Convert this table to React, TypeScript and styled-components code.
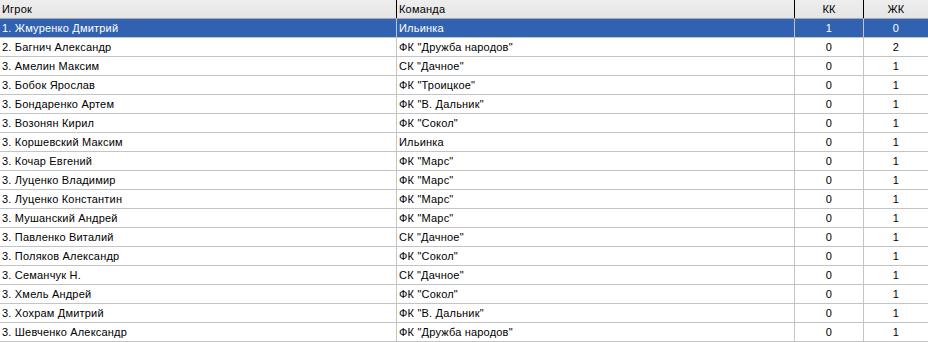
import React from "react";
import styled, { createGlobalStyle } from "styled-components";

const Global = createGlobalStyle`
  html, body { margin: 0; padding: 0; background: #fff; }
  body { font-family: "Liberation Sans", Arial, sans-serif; font-size: 11px; letter-spacing: 0.2px; }
`;

const cols = "397px 398px 69px 64px";

const Grid = styled.div`
  width: 928px;
  display: flex;
  flex-direction: column;
`;

const HeaderRow = styled.div`
  display: grid;
  grid-template-columns: ${cols};
  height: 18px;
  background: linear-gradient(#efeeee, #e6e5e5);
  border-bottom: 1px solid #a8a8a8;
`;

const HeaderCell = styled.div<{ $center?: boolean; $last?: boolean }>`
  display: flex;
  align-items: center;
  justify-content: ${(p) => (p.$center ? "center" : "flex-start")};
  padding-left: ${(p) => (p.$center ? "0" : "2px")};
  border-right: ${(p) => (p.$last ? "none" : "1px solid #000")};
  color: #000;
  white-space: nowrap;
`;

const Row = styled.div<{ $selected?: boolean }>`
  display: grid;
  grid-template-columns: ${cols};
  height: 18px;
  background: ${(p) => (p.$selected ? "#3162b1" : "#fff")};
  color: ${(p) => (p.$selected ? "#fff" : "#000")};
  border-bottom: 1px solid #c4c4c4;
`;

const Cell = styled.div<{ $center?: boolean; $last?: boolean }>`
  display: flex;
  align-items: center;
  justify-content: ${(p) => (p.$center ? "center" : "flex-start")};
  padding-left: ${(p) => (p.$center ? "0" : "2px")};
  border-right: ${(p) => (p.$last ? "none" : "1px solid #c4c4c4")};
  white-space: nowrap;
  overflow: hidden;
`;

const data: [string, string, number, number][] = [
  ["1. Жмуренко Дмитрий", "Ильинка", 1, 0],
  ["2. Багнич Александр", 'ФК "Дружба народов"', 0, 2],
  ["3. Амелин Максим", 'СК "Дачное"', 0, 1],
  ["3. Бобок Ярослав", 'ФК "Троицкое"', 0, 1],
  ["3. Бондаренко Артем", 'ФК "В. Дальник"', 0, 1],
  ["3. Возонян Кирил", 'ФК "Сокол"', 0, 1],
  ["3. Коршевский Максим", "Ильинка", 0, 1],
  ["3. Кочар Евгений", 'ФК "Марс"', 0, 1],
  ["3. Луценко Владимир", 'ФК "Марс"', 0, 1],
  ["3. Луценко Константин", 'ФК "Марс"', 0, 1],
  ["3. Мушанский Андрей", 'ФК "Марс"', 0, 1],
  ["3. Павленко Виталий", 'СК "Дачное"', 0, 1],
  ["3. Поляков Александр", 'ФК "Сокол"', 0, 1],
  ["3. Семанчук Н.", 'СК "Дачное"', 0, 1],
  ["3. Хмель Андрей", 'ФК "Сокол"', 0, 1],
  ["3. Хохрам Дмитрий", 'ФК "В. Дальник"', 0, 1],
  ["3. Шевченко Александр", 'ФК "Дружба народов"', 0, 1],
];

export default function App() {
  return (
    <>
      <Global />
      <Grid>
        <HeaderRow>
          <HeaderCell>Игрок</HeaderCell>
          <HeaderCell>Команда</HeaderCell>
          <HeaderCell $center>КК</HeaderCell>
          <HeaderCell $center $last>ЖК</HeaderCell>
        </HeaderRow>
        {data.map(([player, team, kk, zk], i) => (
          <Row key={i} $selected={i === 0}>
            <Cell>{player}</Cell>
            <Cell>{team}</Cell>
            <Cell $center>{kk}</Cell>
            <Cell $center $last>{zk}</Cell>
          </Row>
        ))}
      </Grid>
    </>
  );
}
